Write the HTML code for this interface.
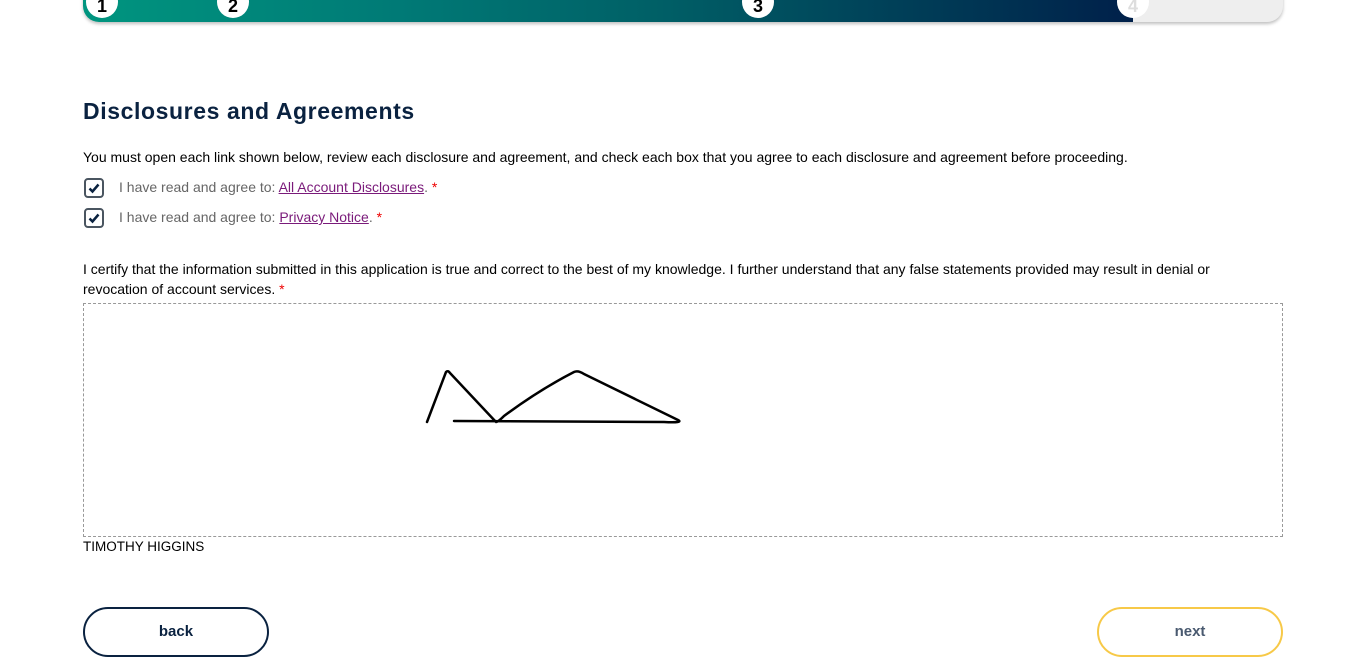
<!DOCTYPE html>
<html><head><meta charset="utf-8"><style>
*{margin:0;padding:0;box-sizing:border-box}
body{width:1366px;height:643px;overflow:hidden;background:#fff;font-family:"Liberation Sans",sans-serif;position:relative;color:#000}
.bar{position:absolute;left:83px;top:-20px;width:1200px;height:42px;border-radius:0 0 16px 16px;background:#eeeeee;box-shadow:0 2px 3px rgba(0,0,0,.25);overflow:hidden}
.fill{position:absolute;left:0;top:0;width:1050px;height:42px;background:linear-gradient(90deg,#00957f 0%,#007a76 30%,#005f66 55%,#00204a 100%)}
.c{position:absolute;top:-14px;width:32px;height:32px;border-radius:50%;background:#fff;text-align:center;line-height:40px;font-weight:bold;font-size:18px;color:#000}
h1{position:absolute;left:83px;top:98px;font-size:23px;letter-spacing:0.6px;font-weight:bold;color:#0a2240}
.p{position:absolute;left:83px;font-size:14px}
.cb{position:absolute;left:84px;width:20px;height:20px;border:2px solid #4a5560;border-radius:4px}
.cb svg{position:absolute;left:2px;top:2px}
.l{position:absolute;left:119px;font-size:14px;color:#666}
.l a{color:#7a1a7a;text-decoration:underline}
.r{color:#e00}
.sig{position:absolute;left:83px;top:303px;width:1200px;height:234px;border:1px dashed #999}
.btn{position:absolute;top:607px;width:186px;height:50px;border-radius:25px;border:2px solid #0a2240;text-align:center;line-height:46px;font-size:15px;font-weight:bold;color:#0a2240}
</style></head><body>
<div class="bar"><div class="fill"></div></div>
<div class="c" style="left:86px">1</div>
<div class="c" style="left:217px">2</div>
<div class="c" style="left:742px">3</div>
<div class="c" style="left:1117px;color:#ddd">4</div>
<h1>Disclosures and Agreements</h1>
<div class="p" style="top:149px">You must open each link shown below, review each disclosure and agreement, and check each box that you agree to each disclosure and agreement before proceeding.</div>
<div class="cb" style="top:178px"><svg width="12" height="12" viewBox="0 0 12 12"><path d="M1.5 6.5 L4.5 9.5 L10.5 2.5" stroke="#0a2240" stroke-width="2.5" fill="none"/></svg></div>
<div class="l" style="top:179px">I have read and agree to: <a>All Account Disclosures</a>. <span class="r">*</span></div>
<div class="cb" style="top:208px"><svg width="12" height="12" viewBox="0 0 12 12"><path d="M1.5 6.5 L4.5 9.5 L10.5 2.5" stroke="#0a2240" stroke-width="2.5" fill="none"/></svg></div>
<div class="l" style="top:209px">I have read and agree to: <a>Privacy Notice</a>. <span class="r">*</span></div>
<div class="p" style="top:259px;width:1150px;line-height:20px">I certify that the information submitted in this application is true and correct to the best of my knowledge. I further understand that any false statements provided may result in denial or revocation of account services. <span class="r">*</span></div>
<div class="sig"><svg width="1200" height="234"><path d="M343 118 L362 68 Q364 66 366 69 L412 118 Q414 118 420 112 Q455 86 490 68 Q494 66 500 70 L594 116 Q600 119 580 118 L370 117" stroke="#000" stroke-width="2.5" fill="none" stroke-linecap="round" stroke-linejoin="round"/></svg></div>
<div class="p" style="top:539px;font-size:13.5px">TIMOTHY HIGGINS</div>
<div class="btn" style="left:83px">back</div>
<div class="btn" style="left:1097px;border-color:#f7c948;color:#4a5a70">next</div>
</body></html>
